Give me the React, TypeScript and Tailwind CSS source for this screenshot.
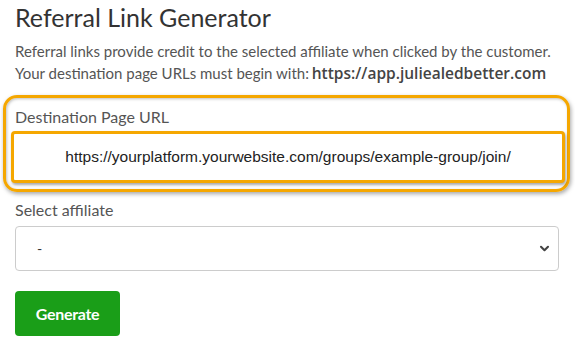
export default function App() {
  return (
    <div className="w-[575px] h-[338px] overflow-hidden bg-white pl-[15px] pr-[16px] font-['Lato',sans-serif]">
      <h2 className="text-[25px] leading-[30px] pt-[2px] text-[#333]">Referral Link Generator</h2>
      <p className="mt-[8px] text-[15px] leading-[22px] text-[#555]">
        Referral links provide credit to the selected affiliate when clicked by the customer.
        <br />
        Your destination page URLs must begin with:{' '}
        <b className="font-['Open_Sans',sans-serif] font-semibold text-[15.5px] text-[#444] -ml-[1px]">https://app.juliealedbetter.com</b>
      </p>

      <div className="mt-[11px] -ml-[12px] -mr-[11px] h-[97px] rounded-[14px] border-[3px] border-[#f5a700] shadow-[1px_2px_4px_rgba(0,0,0,0.35),inset_1px_1px_3px_rgba(0,0,0,0.25)] pl-[9px] pr-[2px] pt-[9px]">
        <label className="block text-[16px] leading-[20px] text-[#555]">Destination Page URL</label>
        <div className="mt-[4px] -ml-[4px] h-[52px] rounded-[4px] border-[3px] border-[#f5a700] bg-white shadow-[1px_2px_3px_rgba(0,0,0,0.35)] flex items-center justify-center font-['Liberation_Sans',Arial,sans-serif] text-[15.5px] text-[#222]">
          https://yourplatform.yourwebsite.com/groups/example-group/join/
        </div>
      </div>

      <label className="block mt-[8px] text-[16px] leading-[20px] text-[#555]">Select affiliate</label>
      <div className="mt-[6px] h-[45px] rounded-[4px] border border-[#ccc] flex items-center justify-between pl-[21px] pr-[8px]">
        <span className="text-[14px] text-[#333]">-</span>
        <svg width="11" height="7" viewBox="0 0 12 8" fill="none">
          <path d="M2 2l4 4 4-4" stroke="#444" strokeWidth="2.4" strokeLinecap="round" strokeLinejoin="round" />
        </svg>
      </div>

      <button className="mt-[20px] w-[105px] h-[45px] rounded-[4px] bg-[#1a9e18] text-white font-bold text-[16px] tracking-[-0.3px]">
        Generate
      </button>
    </div>
  );
}
